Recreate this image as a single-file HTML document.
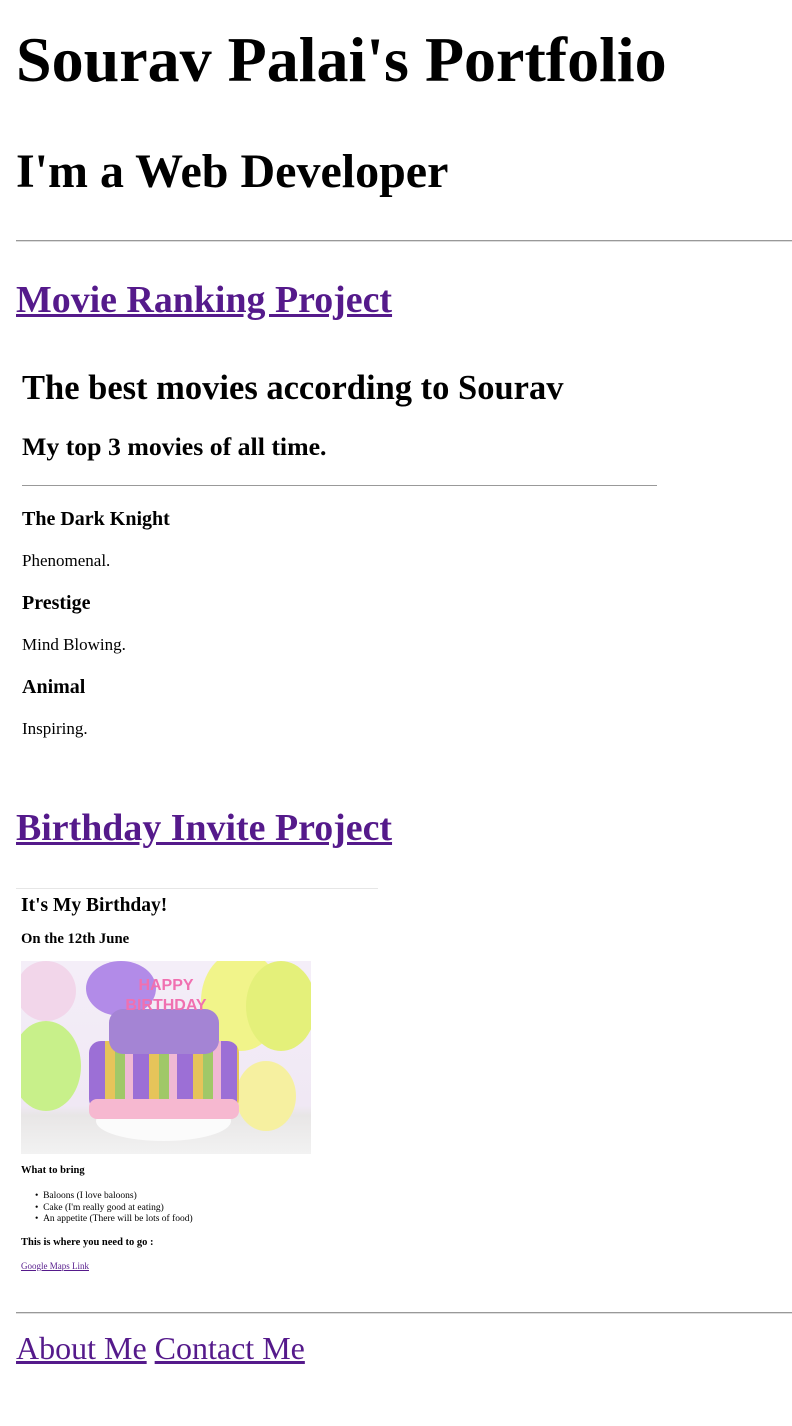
<!DOCTYPE html>
<html><head><meta charset="utf-8"><style>
html,body{margin:0;padding:0;width:792px;height:1426px;background:#fff;overflow:hidden}
body{font-family:"Liberation Serif",serif;color:#000;position:relative}
.t{position:absolute;white-space:nowrap;line-height:1}
.b{font-weight:bold}
a{color:#551a8b;text-decoration:underline}
.hr{position:absolute;border-top:1px solid #999;border-bottom:1px solid #ddd}
</style></head><body>
<div class="t b" style="left:16px;top:28px;font-size:64px">Sourav Palai's Portfolio</div>
<div class="t b" style="left:16px;top:148px;font-size:48px">I'm a Web Developer</div>
<div class="hr" style="left:16px;top:240px;width:776px"></div>
<div class="t b" style="left:16px;top:282px;font-size:37.9px"><a>Movie Ranking Project</a></div>
<div class="t b" style="left:22px;top:371px;font-size:34.5px">The best movies according to Sourav</div>
<div class="t b" style="left:22px;top:434px;font-size:25.8px">My top 3 movies of all time.</div>
<div style="position:absolute;left:22px;top:485px;width:635px;border-top:1px solid #999"></div>
<div class="t b" style="left:22px;top:509px;font-size:20px">The Dark Knight</div>
<div class="t" style="left:22px;top:552px;font-size:17px">Phenomenal.</div>
<div class="t b" style="left:22px;top:593px;font-size:20px">Prestige</div>
<div class="t" style="left:22px;top:636px;font-size:17px">Mind Blowing.</div>
<div class="t b" style="left:22px;top:677px;font-size:20px">Animal</div>
<div class="t" style="left:22px;top:720px;font-size:17px">Inspiring.</div>
<div class="t b" style="left:16px;top:810px;font-size:37.9px"><a>Birthday Invite Project</a></div>
<div style="position:absolute;left:16px;top:888px;width:362px;border-top:1px solid #e6e6e6"></div>
<div class="t b" style="left:21px;top:896px;font-size:19.5px">It's My Birthday!</div>
<div class="t b" style="left:21px;top:932px;font-size:14.7px">On the 12th June</div>
<div style="position:absolute;left:21px;top:961px;width:290px;height:193px;overflow:hidden;background:linear-gradient(#f4eef8,#f0e8f4 75%,#e8e6e6 80%,#f2f2f2)">
 <div style="position:absolute;left:-10px;top:60px;width:70px;height:90px;border-radius:50%;background:#c8f08a"></div>
 <div style="position:absolute;left:65px;top:0px;width:70px;height:55px;border-radius:50%;background:#b28be8"></div>
 <div style="position:absolute;left:180px;top:-10px;width:80px;height:100px;border-radius:50%;background:#f1f48a"></div>
 <div style="position:absolute;left:225px;top:0px;width:70px;height:90px;border-radius:50%;background:#e4f07a"></div>
 <div style="position:absolute;left:-5px;top:0px;width:60px;height:60px;border-radius:50%;background:#f2d6ea"></div>
 <div style="position:absolute;left:215px;top:100px;width:60px;height:70px;border-radius:50%;background:#f6f0a0"></div>
 <div style="position:absolute;left:75px;top:140px;width:135px;height:40px;border-radius:50%;background:#fbfbfb"></div>
 <div style="position:absolute;left:68px;top:80px;width:150px;height:70px;border-radius:12px;background:repeating-linear-gradient(90deg,#9c6fd6 0 16px,#e6c45a 16px 26px,#a0c868 26px 36px,#f0b8d4 36px 44px)"></div>
 <div style="position:absolute;left:68px;top:138px;width:150px;height:20px;border-radius:8px;background:#f6b8d0"></div>
 <div style="position:absolute;left:88px;top:48px;width:110px;height:45px;border-radius:14px;background:#a484d4"></div>
 <div style="position:absolute;left:90px;top:15px;width:110px;height:50px;font:bold 16px 'Liberation Sans',sans-serif;color:#f070b0;text-align:center;line-height:20px">HAPPY<br>BIRTHDAY</div>
</div>
<div class="t b" style="left:21px;top:1166px;font-size:10.5px">What to bring</div>
<div class="t" style="left:35px;top:1191px;font-size:9.5px;line-height:11.5px">•&nbsp;&nbsp;Baloons (I love baloons)<br>•&nbsp;&nbsp;Cake (I'm really good at eating)<br>•&nbsp;&nbsp;An appetite (There will be lots of food)</div>
<div class="t b" style="left:21px;top:1238px;font-size:10.5px">This is where you need to go :</div>
<div class="t" style="left:21px;top:1262px;font-size:9px"><a>Google Maps Link</a></div>
<div class="hr" style="left:16px;top:1312px;width:776px"></div>
<div class="t" style="left:16px;top:1332px;font-size:32px"><a>About Me</a> <a>Contact Me</a></div>
</body></html>
